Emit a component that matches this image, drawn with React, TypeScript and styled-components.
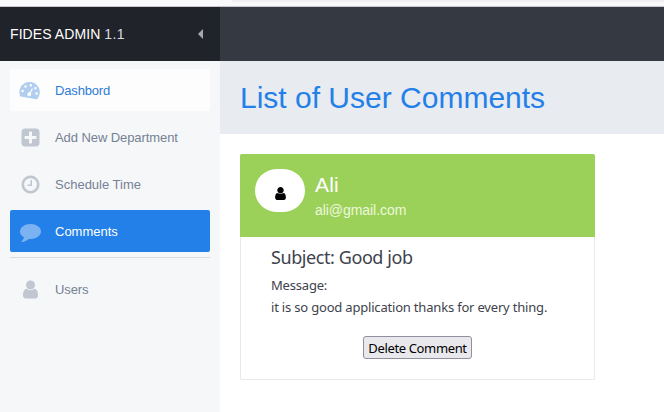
import React from 'react';
import styled, { createGlobalStyle, css } from 'styled-components';

const GlobalStyle = createGlobalStyle`
  * { box-sizing: border-box; }
  body { margin: 0; background: #fff; overflow: hidden; font-family: "Liberation Sans", Arial, sans-serif; }
  h1, h2, h3, p { margin: 0; font-weight: 400; }
`;

const Page = styled.div`
  width: 664px;
  height: 412px;
  display: flex;
  flex-direction: column;
  overflow: hidden;
`;

const BrowserEdge = styled.div`
  height: 7px;
  flex: none;
  background: #f9f9fb;
  border-bottom: 1px solid #c8c8cc;
  padding-left: 232px;
`;

const AddressField = styled.div`
  height: 2px;
  background: #f0f0f3;
  border-bottom-left-radius: 3px;
`;

const TopBar = styled.header`
  height: 54px;
  flex: none;
  display: flex;
  background: #353942;
`;

const Brand = styled.div`
  width: 220px;
  display: flex;
  align-items: center;
  justify-content: space-between;
  padding: 0 17px 0 10px;
  background: #20232a;
  color: #fff;
  font-size: 14px;
  line-height: 20px;
  letter-spacing: 0.08px;
  white-space: nowrap;
`;

const Version = styled.span`
  color: #d9dde2;
  letter-spacing: 0.4px;
`;

const Body = styled.div`
  flex: 1;
  display: flex;
  min-height: 0;
`;

const Sidebar = styled.nav`
  width: 220px;
  flex: none;
  padding: 8px 10px;
  background: #f5f7f9;
`;

type Tone = 'plain' | 'hover' | 'active';

const tones = {
  plain: css`background: transparent; color: #768294; --icon: #c1c7d0;`,
  hover: css`background: #fdfdfd; color: #2d7bd5; --icon: #b1cdef;`,
  active: css`background: #2380e8; color: #fff; --icon: #7bb2f1;`,
};

const NavItem = styled.a<{ $tone: Tone }>`
  ${({ $tone }) => tones[$tone]}
  height: 42px;
  margin-bottom: 5px;
  display: flex;
  align-items: center;
  border-radius: 2px;
  font-size: 13px;
  line-height: 20px;
  white-space: nowrap;
`;

const IconSlot = styled.span`
  width: 40px;
  margin-right: 5px;
  display: flex;
  justify-content: center;
  color: var(--icon);
`;

const NavLabel = styled.span<{ $spacing: number }>`
  padding-top: 2px;
  letter-spacing: ${({ $spacing }) => $spacing}px;
`;

const Divider = styled.div`
  height: 1px;
  margin-bottom: 10px;
  background: #d9dce1;
`;

const Main = styled.main`
  flex: 1;
  background: #fff;
`;

const TitleBand = styled.div`
  height: 73px;
  padding: 0 20px;
  display: flex;
  align-items: center;
  background: #e8ebf0;
`;

const Title = styled.h1`
  color: #2380e8;
  font-size: 30px;
  line-height: 36px;
  white-space: nowrap;
`;

const Card = styled.article`
  width: 355px;
  height: 226px;
  margin: 20px;
  border: 1px solid #e8e8ed;
  border-top: 0;
  border-radius: 2px;
`;

const CardHeader = styled.div`
  height: 83px;
  margin: 0 -1px;
  padding: 15px;
  display: flex;
  gap: 10px;
  background: #9bd159;
  border-radius: 2px 2px 0 0;
`;

const Avatar = styled.div`
  width: 50px;
  height: 43px;
  padding-top: 5px;
  display: flex;
  align-items: center;
  justify-content: center;
  border-radius: 22px;
  background: #fff;
  color: #000;
`;

const Name = styled.h2`
  height: 32px;
  color: #fff;
  font-size: 21px;
  line-height: 32px;
  letter-spacing: 0.2px;
`;

const Email = styled.p`
  color: #edf8dd;
  font-size: 14px;
  line-height: 18px;
  letter-spacing: -0.06px;
`;

const CardBody = styled.div`
  padding: 8px 30px;
  display: flex;
  flex-direction: column;
  color: #3e424d;
  font-family: "Noto Sans", "Segoe UI", sans-serif;
`;

const Subject = styled.h3`
  font-size: 18px;
  line-height: 24px;
  letter-spacing: -0.42px;
`;

const Message = styled.p`
  margin-top: 5px;
  font-size: 13px;
  line-height: 22px;
  letter-spacing: -0.19px;
  white-space: nowrap;
`;

const DeleteButton = styled.button`
  width: 109px;
  height: 23px;
  margin: 18px 0 0 92px;
  padding: 1px 0 0;
  border: 1px solid #8f8f9d;
  border-radius: 3px;
  background: #e9e9ed;
  color: #000;
  font: 13px/19px "Noto Sans", "Segoe UI", sans-serif;
  letter-spacing: -0.36px;
  white-space: nowrap;
`;

const glyphs = {
  user: 'M1536 1399q0 109-62.5 187t-150.5 78h-854q-88 0-150.5-78t-62.5-187q0-85 8.5-160.5t31.5-152 58.5-131 94-89 134.5-34.5q131 128 313 128t313-128q76 0 134.5 34.5t94 89 58.5 131 31.5 152 8.5 160.5zm-256-887q0 159-112.5 271.5t-271.5 112.5-271.5-112.5-112.5-271.5 112.5-271.5 271.5-112.5 271.5 112.5 112.5 271.5z',
  clock: 'M1024 544v448q0 14-9 23t-23 9h-320q-14 0-23-9t-9-23v-64q0-14 9-23t23-9h224v-352q0-14 9-23t23-9h64q14 0 23 9t9 23zm416 352q0-148-73-273t-198-198-273-73-273 73-198 198-73 273 73 273 198 198 273 73 273-73 198-198 73-273zm224 0q0 209-103 385.5t-279.5 279.5-385.5 103-385.5-103-279.5-279.5-103-385.5 103-385.5 279.5-279.5 385.5-103 385.5 103 279.5 279.5 103 385.5z',
  plus: 'M1408 960v-128q0-26-19-45t-45-19h-320v-320q0-26-19-45t-45-19h-128q-26 0-45 19t-19 45v320h-320q-26 0-45 19t-19 45v128q0 26 19 45t45 19h320v320q0 26 19 45t45 19h128q26 0 45-19t19-45v-320h320q26 0 45-19t19-45zm256-544v960q0 119-84.5 203.5t-203.5 84.5h-960q-119 0-203.5-84.5t-84.5-203.5v-960q0-119 84.5-203.5t203.5-84.5h960q119 0 203.5 84.5t84.5 203.5z',
  comment: 'M1792 896q0 174-120 321.5t-326 233-450 85.5q-70 0-145-8-198 175-460 242-49 14-114 22-17 2-30.5-9t-17.5-29v-1q-3-4-.5-12t2-10 4.5-9.5l6-9 7-8.5 8-9q7-8 31-34.5t34.5-38 31-39.5 32.5-51 27-59 26-76q-157-89-247.5-220t-90.5-281q0-130 71-248.5t191-204.5 286-136.5 348-50.5q244 0 450 85.5t326 233 120 321.5z',
};

const Glyph = ({ name, size = 21 }: { name: keyof typeof glyphs; size?: number }) => (
  <svg width={size} height={size} viewBox="0 0 1792 1792" fill="currentColor">
    <path d={glyphs[name]} />
  </svg>
);

const Gauge = () => (
  <svg width="22" height="22" viewBox="0 0 22 22">
    <g transform="rotate(10 11 11)">
      <path d="M2.3 18.5A10.2 10.2 0 1 1 19.7 18.5Q19.4 19 18.8 19H3.2Q2.6 19 2.3 18.5Z" fill="currentColor" />
      <g fill="#fdfdfd">
        <circle cx="3.9" cy="13.3" r="1.3" />
        <circle cx="6" cy="8.3" r="1.3" />
        <circle cx="11" cy="6.2" r="1.3" />
        <circle cx="16" cy="8.3" r="1.3" />
        <circle cx="18.1" cy="13.3" r="1.3" />
        <circle cx="11" cy="15.3" r="2" />
        <path d="M12.6 9L13.7 9.3L12 15L10.8 14.6Z" />
      </g>
    </g>
  </svg>
);

const App = () => (
  <Page>
    <GlobalStyle />
    <BrowserEdge><AddressField /></BrowserEdge>
    <TopBar>
      <Brand>
        <span>FIDES ADMIN <Version>1.1</Version></span>
        <svg width="5" height="10" viewBox="0 0 5 10"><path d="M5 0V10L0 5Z" fill="#a5a8ae" /></svg>
      </Brand>
    </TopBar>
    <Body>
      <Sidebar>
        <NavItem $tone="hover"><IconSlot><Gauge /></IconSlot><NavLabel $spacing={-0.16}>Dashbord</NavLabel></NavItem>
        <NavItem $tone="plain"><IconSlot><Glyph name="plus" /></IconSlot><NavLabel $spacing={-0.08}>Add New Department</NavLabel></NavItem>
        <NavItem $tone="plain"><IconSlot><Glyph name="clock" /></IconSlot><NavLabel $spacing={0}>Schedule Time</NavLabel></NavItem>
        <NavItem $tone="active"><IconSlot><Glyph name="comment" /></IconSlot><NavLabel $spacing={0}>Comments</NavLabel></NavItem>
        <Divider />
        <NavItem $tone="plain"><IconSlot><Glyph name="user" /></IconSlot><NavLabel $spacing={-0.1}>Users</NavLabel></NavItem>
      </Sidebar>
      <Main>
        <TitleBand><Title>List of User Comments</Title></TitleBand>
        <Card>
          <CardHeader>
            <Avatar><Glyph name="user" size={15} /></Avatar>
            <div>
              <Name>Ali</Name>
              <Email>ali@gmail.com</Email>
            </div>
          </CardHeader>
          <CardBody>
            <Subject>Subject: Good job</Subject>
            <Message>Message:<br />it is so good application thanks for every thing.</Message>
            <DeleteButton>Delete Comment</DeleteButton>
          </CardBody>
        </Card>
      </Main>
    </Body>
  </Page>
);

export default App;
